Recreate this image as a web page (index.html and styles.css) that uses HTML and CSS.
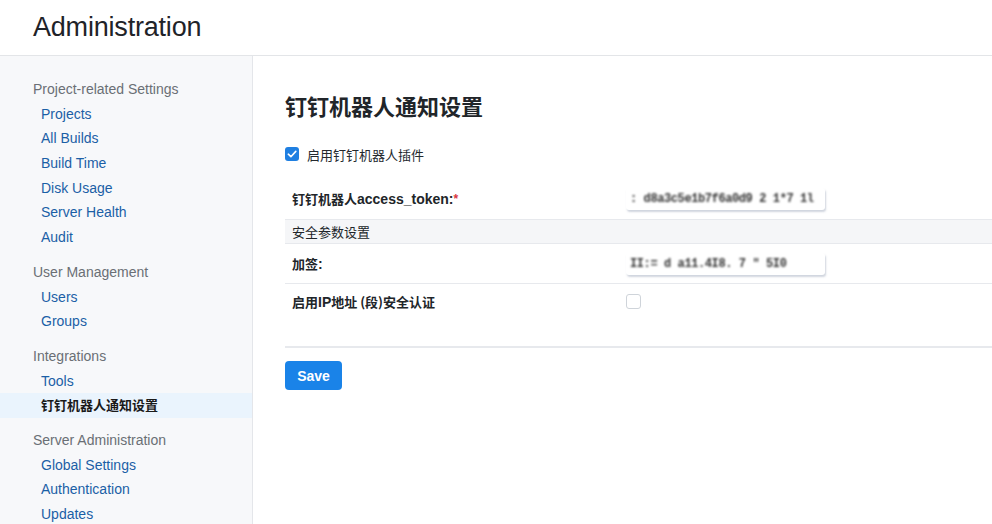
FILE: index.html
```html
<!DOCTYPE html>
<html lang="zh">
<head>
<meta charset="utf-8">
<title>Administration</title>
<link rel="stylesheet" href="styles.css">
</head>
<body>
<header class="topbar">
  <h1 class="page-title">Administration</h1>
</header>
<div class="layout">
  <nav class="sidebar">
    <div class="group">
      <div class="group-title">Project-related Settings</div>
      <a class="nav-link">Projects</a>
      <a class="nav-link">All Builds</a>
      <a class="nav-link">Build Time</a>
      <a class="nav-link">Disk Usage</a>
      <a class="nav-link">Server Health</a>
      <a class="nav-link">Audit</a>
    </div>
    <div class="group">
      <div class="group-title">User Management</div>
      <a class="nav-link">Users</a>
      <a class="nav-link">Groups</a>
    </div>
    <div class="group">
      <div class="group-title">Integrations</div>
      <a class="nav-link">Tools</a>
      <a class="nav-link active"><span class="zh">钉钉机器人通知设置</span></a>
    </div>
    <div class="group">
      <div class="group-title">Server Administration</div>
      <a class="nav-link">Global Settings</a>
      <a class="nav-link">Authentication</a>
      <a class="nav-link">Updates</a>
    </div>
  </nav>
  <main class="content">
    <h2 class="section-title">钉钉机器人通知设置</h2>
    <label class="check-row">
      <span class="checkbox checked">
        <svg viewBox="0 0 14 14" width="14" height="14"><path d="M3.3 7.2 L5.9 9.7 L10.8 4.4" fill="none" stroke="#fff" stroke-width="1.6" stroke-linecap="round" stroke-linejoin="round"/></svg>
      </span>
      <span class="check-label zh">启用钉钉机器人插件</span>
    </label>
    <div class="form-table">
      <div class="form-row first">
        <div class="form-label"><span class="zh">钉钉机器人</span>access_token:<span class="req">*</span></div>
        <div class="form-value"><div class="masked-input"><span class="masked">: d8a3c5e1b7f6a0d9 2 1*7 1l</span></div></div>
      </div>
      <div class="form-section">安全参数设置</div>
      <div class="form-row">
        <div class="form-label"><span class="zh">加签</span>:</div>
        <div class="form-value"><div class="masked-input"><span class="masked">II:= d a11.4I8. 7 " 5I0</span></div></div>
      </div>
      <div class="form-row last">
        <div class="form-label"><span class="zh">启用</span>IP<span class="zh">地址 (段)安全认证</span></div>
        <div class="form-value"><span class="checkbox empty"></span></div>
      </div>
    </div>
    <button class="btn-save">Save</button>
  </main>
</div>
</body>
</html>
```
FILE: styles.css
```css
* { box-sizing: border-box; }
html, body { margin: 0; padding: 0; }
body {
  font-family: "Liberation Sans", Arial, "Noto Sans CJK SC", sans-serif;
  color: #212529;
  background: #fff;
  width: 992px;
  height: 524px;
  overflow: hidden;
}
.zh { font-family: "Noto Sans CJK SC", sans-serif; font-size: 13px; }
.topbar {
  height: 56px;
  border-bottom: 1px solid #e3e5e8;
  display: flex;
  align-items: center;
  padding-left: 33px;
}
.page-title {
  margin: 0;
  font-size: 27px;
  font-weight: 500;
  letter-spacing: -0.2px;
  color: #1f2328;
}
.layout {
  display: flex;
  height: 468px;
}
.sidebar {
  width: 253px;
  flex: none;
  background: #f7f8fa;
  border-right: 1px solid #e4e6ea;
  padding-top: 21px;
}
.group { margin-bottom: 10px; display: flex; flex-direction: column; }
.group-title {
  padding-left: 33px;
  font-size: 14px;
  line-height: 24.7px;
  color: #6a6f75;
}
.nav-link {
  padding-left: 41px;
  font-size: 14px;
  line-height: 24.7px;
  height: 24.7px;
  color: #1b5fa6;
  cursor: pointer;
}
.nav-link.active {
  background: #eaf4fd;
  color: #1a1a1a;
  font-weight: 700;
}
.content {
  flex: 1;
  padding: 37px 0 0 32px;
}
.section-title {
  margin: 0;
  font-size: 22px;
  line-height: 30px;
  font-weight: 700;
  color: #212529;
}
.check-row {
  display: flex;
  align-items: center;
  margin-top: 17px;
  height: 28px;
}
.checkbox {
  width: 14px;
  height: 14px;
  border-radius: 3px;
  display: inline-flex;
  flex: none;
}
.checkbox.checked { background: #1f7fe1; }
.checkbox.empty {
  border: 1px solid #cfd4da;
  background: #fff;
  width: 15px;
  height: 15px;
  margin-top: 2px;
}
.check-label {
  margin-left: 8px;
  color: #24292e;
}
.form-table { margin-top: 10px; }
.form-row {
  display: flex;
  align-items: center;
  border-bottom: 1px solid #e7e9ed;
  height: 40px;
}
.form-row.first { height: 42px; }
.form-row.last {
  height: 64px;
  align-items: flex-start;
  padding-top: 8px;
  border-bottom: 2px solid #e7e9ed;
}
.form-label {
  width: 341px;
  flex: none;
  padding-left: 7px;
  font-size: 14px;
  line-height: 20px;
  font-weight: 700;
  color: #212529;
}
.req { color: #d9363e; font-size: 12px; vertical-align: top; }
.form-value { display: flex; align-items: center; }
.masked-input {
  width: 199px;
  height: 22px;
  background: #fff;
  border-radius: 3px;
  box-shadow: 1px 2px 2px rgba(120, 135, 160, 0.35);
  display: flex;
  align-items: center;
  padding-left: 4px;
  overflow: hidden;
}
.masked {
  font-family: "Liberation Mono", monospace;
  font-size: 12px;
  font-weight: 700;
  color: #333;
  filter: blur(1.2px);
  white-space: pre;
  letter-spacing: -0.4px;
}
.form-section {
  height: 24px;
  background: #f5f6f8;
  border-bottom: 1px solid #e7e9ed;
  padding-left: 7px;
  font-family: "Noto Sans CJK SC", sans-serif;
  font-size: 13px;
  line-height: 23px;
  color: #212529;
}
.btn-save {
  margin-top: 13px;
  width: 57px;
  height: 29px;
  border: none;
  border-radius: 4px;
  background: #1a83e8;
  color: #fff;
  font-family: "Liberation Sans", Arial, sans-serif;
  font-size: 14px;
  font-weight: 700;
  cursor: pointer;
}
```
